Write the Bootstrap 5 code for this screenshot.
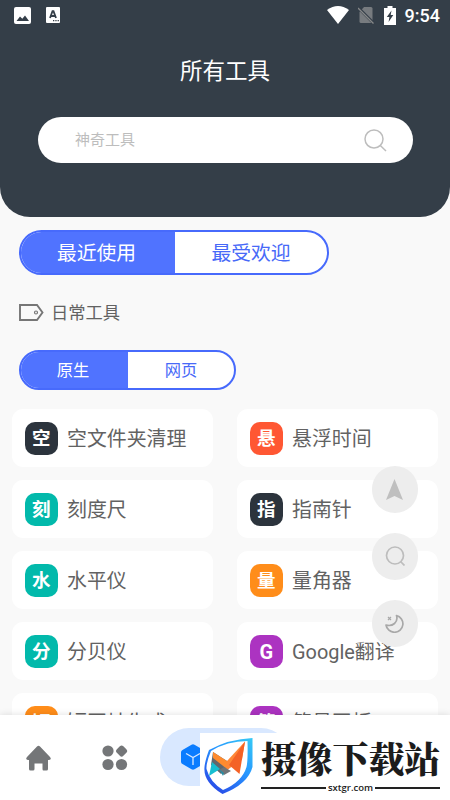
<!DOCTYPE html>
<html lang="zh-CN">
<head>
<meta charset="utf-8">
<meta name="viewport" content="width=device-width, initial-scale=1">
<title>所有工具</title>
<link rel="stylesheet" href="https://cdn.jsdelivr.net/npm/bootstrap@5.3.0/dist/css/bootstrap.min.css">
<style>
body { font-family: Roboto, "Noto Sans CJK SC", sans-serif; background: #f9f9f9; color: #626262; }
svg { display: block; flex: none; }
.screen { width: 450px; height: 800px; background: #f9f9f9; }
.hero { height: 217px; background: #343e48; border-radius: 0 0 30px 30px; }
.status { height: 30px; padding: 0 10px 0 14px; }
.status-left { gap: 15px; }
.status-right { gap: 9px; }
.clock { font-size: 18px; font-weight: 500; line-height: 30px; padding-top: 1px; }
.title { font-size: 22.5px; line-height: 32px; margin-top: 25px; }
.search { height: 46px; width: 375px; margin: 29.5px auto 0; padding: 1px 26px 0 37.5px; color: #bdbdbd; font-size: 15px; }
.controls { margin-left: 19px; }
.seg { border: 2px solid #476afc; color: #4769f8; width: max-content; }
.seg > div { padding-top: 2px; }
.seg .on { background: #5073ff; color: #fff; padding-right: 3px; }
.seg-lg { height: 45px; width: 310px; font-size: 19.8px; margin-top: 13px; }
.seg-lg .on { width: 154px; }
.seg-sm { height: 40px; width: 217px; font-size: 16.3px; }
.seg-sm .on { width: 107px; }
.seg-sm > div { padding-top: 3px; }
.heading { height: 75px; font-size: 17.3px; gap: 7px; }
.heading span { padding-top: 3px; }
.tools { margin: 19px 12px 0; display: grid; grid-template-columns: 200.5px 200.5px; column-gap: 24.5px; row-gap: 13px; }
.tool { height: 58px; border-radius: 11px; padding-left: 13px; gap: 9.5px; font-size: 19.9px; }
.tool span { padding-top: 4px; }
.glyph { width: 32.5px; height: 33px; border-radius: 10px; font-size: 18.5px; padding-top: 4px; }
.glyph-latin { padding-top: 1px; font-size: 20px; }
.c-dark { background: #2c343d; } .c-teal { background: #02b9ab; } .c-red { background: #ff5733; }
.c-orange { background: #ff8d1a; } .c-purple { background: #ac33c1; }
.fab-stack { right: 32px; top: 466px; gap: 20.5px; }
.fab { width: 46.5px; height: 46.5px; background: #ededed; }
.tabs { height: 85px; padding: 13px 0 0 26px; box-shadow: 0 0 7px rgba(0,0,0,.13); z-index: 3; }
.tab-off { height: 59px; gap: 51px; }
.tab-on { width: 130px; height: 58px; background: #d9e8ff; padding-left: 20.5px; margin-left: 32px; }
.brand { width: 250px; height: 67px; right: 0; bottom: 0; z-index: 4; color: #1c1c1c; padding-left: 4px; gap: 7px; }
.brand-text { width: 179px; padding-top: 2px; }
.brand-name { font: 900 35.8px/46px "Noto Serif CJK SC", "Noto Sans CJK SC", serif; white-space: nowrap; }
.brand-site { font: 600 9.5px/12px "Open Sans", sans-serif; gap: 2px; margin-top: 1px; }
.rule { height: 1.7px; background: #222; }
</style>
<script src="https://cdn.jsdelivr.net/npm/bootstrap@5.3.0/dist/js/bootstrap.bundle.min.js"></script>
</head>
<body>
<div class="screen position-relative overflow-hidden d-flex flex-column">
  <header class="hero text-white flex-shrink-0">
    <div class="status d-flex align-items-center">
      <div class="status-left d-flex align-items-center">
        <svg width="17" height="17" viewBox="0 0 17 17"><rect width="17" height="17" rx="2" fill="#fff"/><path d="M2.500 14 6 9.500l2.300 2.200L11 8.500l4 5.500z" fill="#343e48"/></svg>
        <svg width="14" height="16" viewBox="0 0 14 16"><rect width="14" height="16" rx="1" fill="#fff"/><path d="M4 11 6.500 4.200h1L10 11M5 9h4" fill="none" stroke="#343e48" stroke-width="1.800"/><path d="M7 13.700h1.300m1 0h1.300m1 0h1.300" stroke="#343e48" stroke-width="1.200"/></svg>
      </div>
      <div class="status-right ms-auto d-flex align-items-center">
        <svg width="22" height="18" viewBox="0 0 22 18"><path d="M0 4Q11-4 22 4L11 18z" fill="#fff"/></svg>
        <svg width="17" height="18" viewBox="0 0 17 18"><path d="M6 1h7q1.500 0 1.500 1.500V17H3q-1.500 0-1.500-1.500V6z" fill="#777b7f"/><path d="M0 1.500 16 17.500" stroke="#343e48" stroke-width="3"/><path d="M0 2 15.500 17.500" stroke="#858788" stroke-width="1.300"/></svg>
        <svg width="12" height="19" viewBox="0 0 12 19"><path d="M0 2h3.500V0h5v2H12v17H0z" fill="#fff"/><path d="M7.500 4.500 2.800 11h2.600l-.8 5L9.300 9H6.700z" fill="#343e48"/></svg>
        <span class="clock">9:54</span>
      </div>
    </div>
    <h1 class="title text-center fw-normal mb-0">所有工具</h1>
    <div class="search bg-white rounded-pill d-flex align-items-center justify-content-between">
      <span>神奇工具</span>
      <svg width="23" height="23" viewBox="0 0 23 23" fill="none" stroke="#bdbdbd" stroke-width="1.500"><circle cx="10" cy="10" r="9"/><path d="m16.300 16.500 5.700 5.500"/></svg>
    </div>
  </header>

  <main class="flex-grow-1 overflow-hidden">
    <div class="controls">
      <div class="seg seg-lg rounded-pill overflow-hidden d-flex bg-white">
        <div class="on d-flex align-items-center justify-content-center">最近使用</div>
        <div class="flex-fill d-flex align-items-center justify-content-center">最受欢迎</div>
      </div>
      <div class="heading d-flex align-items-center">
        <svg width="25" height="17" viewBox="0 0 25 17" fill="none" stroke="#767676"><path d="M1 1h17l5.500 7.500L18 16H1z" stroke-width="1.900"/><circle cx="17" cy="8.500" r="1.500" stroke-width="1.200"/></svg>
        <span>日常工具</span>
      </div>
      <div class="seg seg-sm rounded-pill overflow-hidden d-flex bg-white">
        <div class="on d-flex align-items-center justify-content-center">原生</div>
        <div class="flex-fill d-flex align-items-center justify-content-center">网页</div>
      </div>
    </div>
    <div class="tools">
      <div class="tool bg-white d-flex align-items-center"><b class="glyph c-dark text-white d-flex align-items-center justify-content-center">空</b><span>空文件夹清理</span></div>
      <div class="tool bg-white d-flex align-items-center"><b class="glyph c-red text-white d-flex align-items-center justify-content-center">悬</b><span>悬浮时间</span></div>
      <div class="tool bg-white d-flex align-items-center"><b class="glyph c-teal text-white d-flex align-items-center justify-content-center">刻</b><span>刻度尺</span></div>
      <div class="tool bg-white d-flex align-items-center"><b class="glyph c-dark text-white d-flex align-items-center justify-content-center">指</b><span>指南针</span></div>
      <div class="tool bg-white d-flex align-items-center"><b class="glyph c-teal text-white d-flex align-items-center justify-content-center">水</b><span>水平仪</span></div>
      <div class="tool bg-white d-flex align-items-center"><b class="glyph c-orange text-white d-flex align-items-center justify-content-center">量</b><span>量角器</span></div>
      <div class="tool bg-white d-flex align-items-center"><b class="glyph c-teal text-white d-flex align-items-center justify-content-center">分</b><span>分贝仪</span></div>
      <div class="tool bg-white d-flex align-items-center"><b class="glyph glyph-latin c-purple text-white d-flex align-items-center justify-content-center">G</b><span>Google翻译</span></div>
      <div class="tool bg-white d-flex align-items-center"><b class="glyph c-orange text-white d-flex align-items-center justify-content-center">短</b><span>短网址生成</span></div>
      <div class="tool bg-white d-flex align-items-center"><b class="glyph c-purple text-white d-flex align-items-center justify-content-center">简</b><span>简易画板</span></div>
    </div>
  </main>

  <div class="fab-stack position-absolute d-flex flex-column">
    <div class="fab rounded-circle d-flex align-items-center justify-content-center"><svg width="17" height="21" viewBox="0 0 17 21"><path d="M8.500 0 17 21l-8.500-4L0 21z" fill="#bfbfbf"/></svg></div>
    <div class="fab rounded-circle d-flex align-items-center justify-content-center"><svg width="20" height="20" viewBox="0 0 20 20" fill="none" stroke="#bdbdbd" stroke-width="1.700"><circle cx="10" cy="9.500" r="8.500"/><path d="m15.500 15.500 4 4"/></svg></div>
    <div class="fab rounded-circle d-flex align-items-center justify-content-center"><svg width="19" height="19" viewBox="0 0 19 19" fill="none" stroke="#a8a8a8" stroke-width="1.700" stroke-linejoin="round"><path d="M11.500 1.500A8.500 8.500 0 1 1 1 11Q6 12.500 9.500 9.500T11.500 1.500z"/><path d="m3 3 3 3m0-3L3 6" stroke-width="1.200"/></svg></div>
  </div>

  <nav class="tabs bg-white flex-shrink-0 d-flex position-relative">
    <div class="tab-off d-flex align-items-center">
      <svg width="25" height="26" viewBox="0 0 25 26"><path d="M11 1.500q1.500-1.500 3 0L24 12q2 2.500-1 3h-1v9q0 1.500-1.500 1.500h-3Q16.500 25.500 16.500 24v-5.500h-8V24q0 1.500-1.500 1.500H4.500Q3 25.500 3 24v-9H2q-3-.5-1-3z" fill="#747678"/></svg>
      <svg width="26" height="26" viewBox="0 0 26 26" fill="#747678"><circle cx="6" cy="6" r="5.600"/><rect x="15" y="1.500" width="9.200" height="9.200" rx="2.500" transform="rotate(45 19.600 6.100)"/><circle cx="6" cy="19.500" r="5.600"/><circle cx="19.500" cy="19.500" r="5.600"/></svg>
    </div>
    <div class="tab-on rounded-pill d-flex align-items-center">
      <svg width="24" height="26" viewBox="0 0 24 26"><path d="M10.500.7q1.500-.9 3 0l9 5.200q1.500.8 1.500 2.300v9.600q0 1.500-1.500 2.300l-9 5.200q-1.500.9-3 0l-9-5.200Q0 19.300 0 17.800V8.200q0-1.500 1.500-2.300z" fill="#0b7cff"/><path d="m5 9.500 7 4 7-4m-7 4V21" fill="none" stroke="#d9e8ff" stroke-width="1.300"/></svg>
    </div>
  </nav>

  <div class="brand position-absolute bg-white d-flex">
    <svg width="50" height="62" viewBox="0 0 50 62">
      <defs><linearGradient id="edge" x1="1" y1="0" x2="0.300" y2="1"><stop stop-color="#36c9f5"/><stop offset=".5" stop-color="#2695ff"/><stop offset="1" stop-color="#294ce8"/></linearGradient></defs>
      <path fill-rule="evenodd" d="M5 17Q25 6 48.500 5V34Q44 51 18.500 61Q-1 49 .5 34Q1 28 5 17zM7 18Q2 30 2.500 36Q6 49 19 57Q38 49 42.500 34Q44 28 43.500 8Q23 8 7 18z" fill="url(#edge)"/>
      <path d="m9 19 14 9v8l-6 5L7 32z" fill="#62676c"/><path d="m9 19 14 9v8L9 25z" fill="#ff8b2e"/>
      <path d="M23 28 41 8.500 38 26 22 38z" fill="#ff8737"/><path d="m41 8.500-5.500 32.500L25 32z" fill="#f46226"/><path d="m20 34 7 4-7 4-5-5z" fill="#707477"/>
      <path d="m8 29 8 7-11 7z" fill="#17bed1"/><path d="m15 36 5 4-1 3z" fill="#258da5"/>
    </svg>
    <div class="brand-text">
      <div class="brand-name">摄像下载站</div>
      <div class="brand-site d-flex align-items-center"><span class="rule flex-fill"></span><span>sxtgr.com</span><span class="rule flex-fill"></span></div>
    </div>
  </div>
</div>
</body>
</html>
